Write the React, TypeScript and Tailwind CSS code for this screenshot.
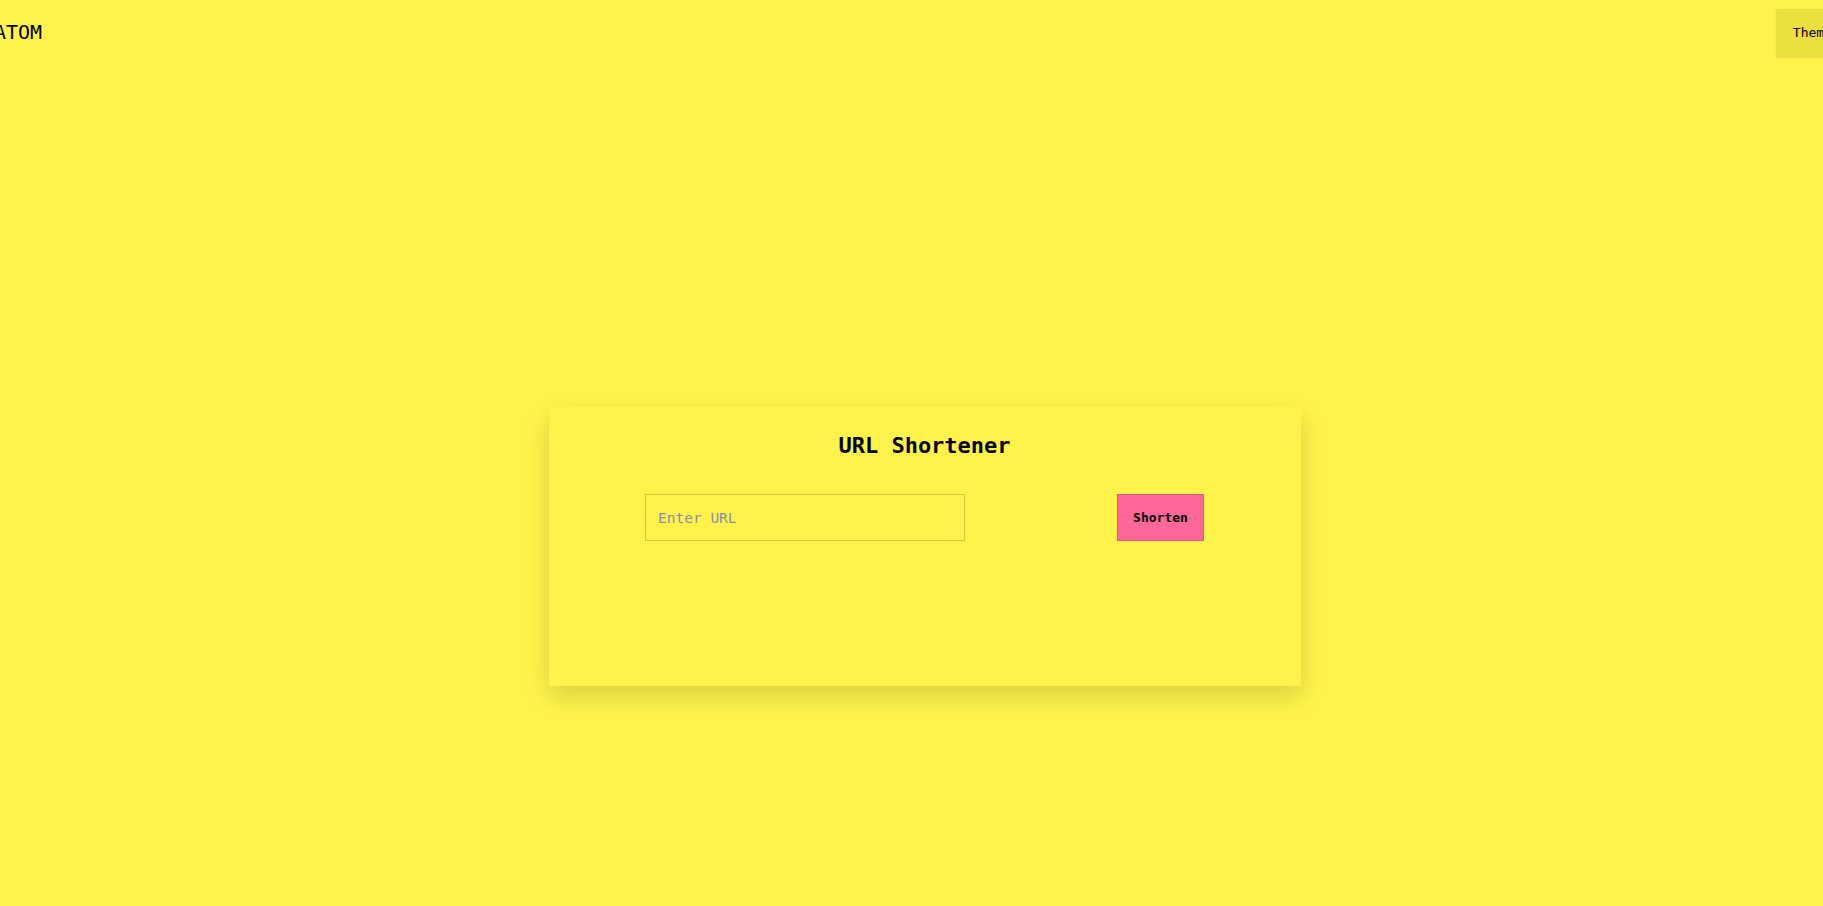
import React from "react";

export default function App() {
  const mono = { fontFamily: '"DejaVu Sans Mono", "Liberation Mono", monospace' };
  return (
    <div className="w-screen h-screen overflow-hidden bg-[#fff34b] text-black" style={mono}>
      <div className="w-[1850px] h-full">
        <header className="flex items-start justify-between h-[64px]">
          <div className="ml-[-6px] mt-[20px] text-[20px] leading-[24px]">ATOM</div>
          <button className="mt-[9px] mr-[1px] h-[48px] px-[17px] bg-[#ebdf40] text-[13px] shadow-[0_1px_3px_rgba(0,0,0,0.08)]">
            Theme
          </button>
        </header>
        <main className="flex justify-center pt-[343px]">
          <div className="w-[752px] h-[279px] pl-24 pr-[97px] pt-6 bg-[#fff34b] shadow-[0_10px_25px_rgba(0,0,0,0.15)] flex flex-col">
            <h1 className="text-center font-bold text-[22px] leading-[30px]">URL Shortener</h1>
            <div className="mt-[33px] flex justify-between items-center">
              <input
                className="w-[320px] h-[47px] px-[12px] border border-[#d3c83d] bg-transparent text-[14.5px] outline-none placeholder:text-[#8a8fab]"
                style={mono}
                placeholder="Enter URL"
              />
              <button className="w-[87px] h-[47px] bg-[#ff6699] border border-[#e2588c] font-bold text-[13px]">
                Shorten
              </button>
            </div>
          </div>
        </main>
      </div>
    </div>
  );
}
